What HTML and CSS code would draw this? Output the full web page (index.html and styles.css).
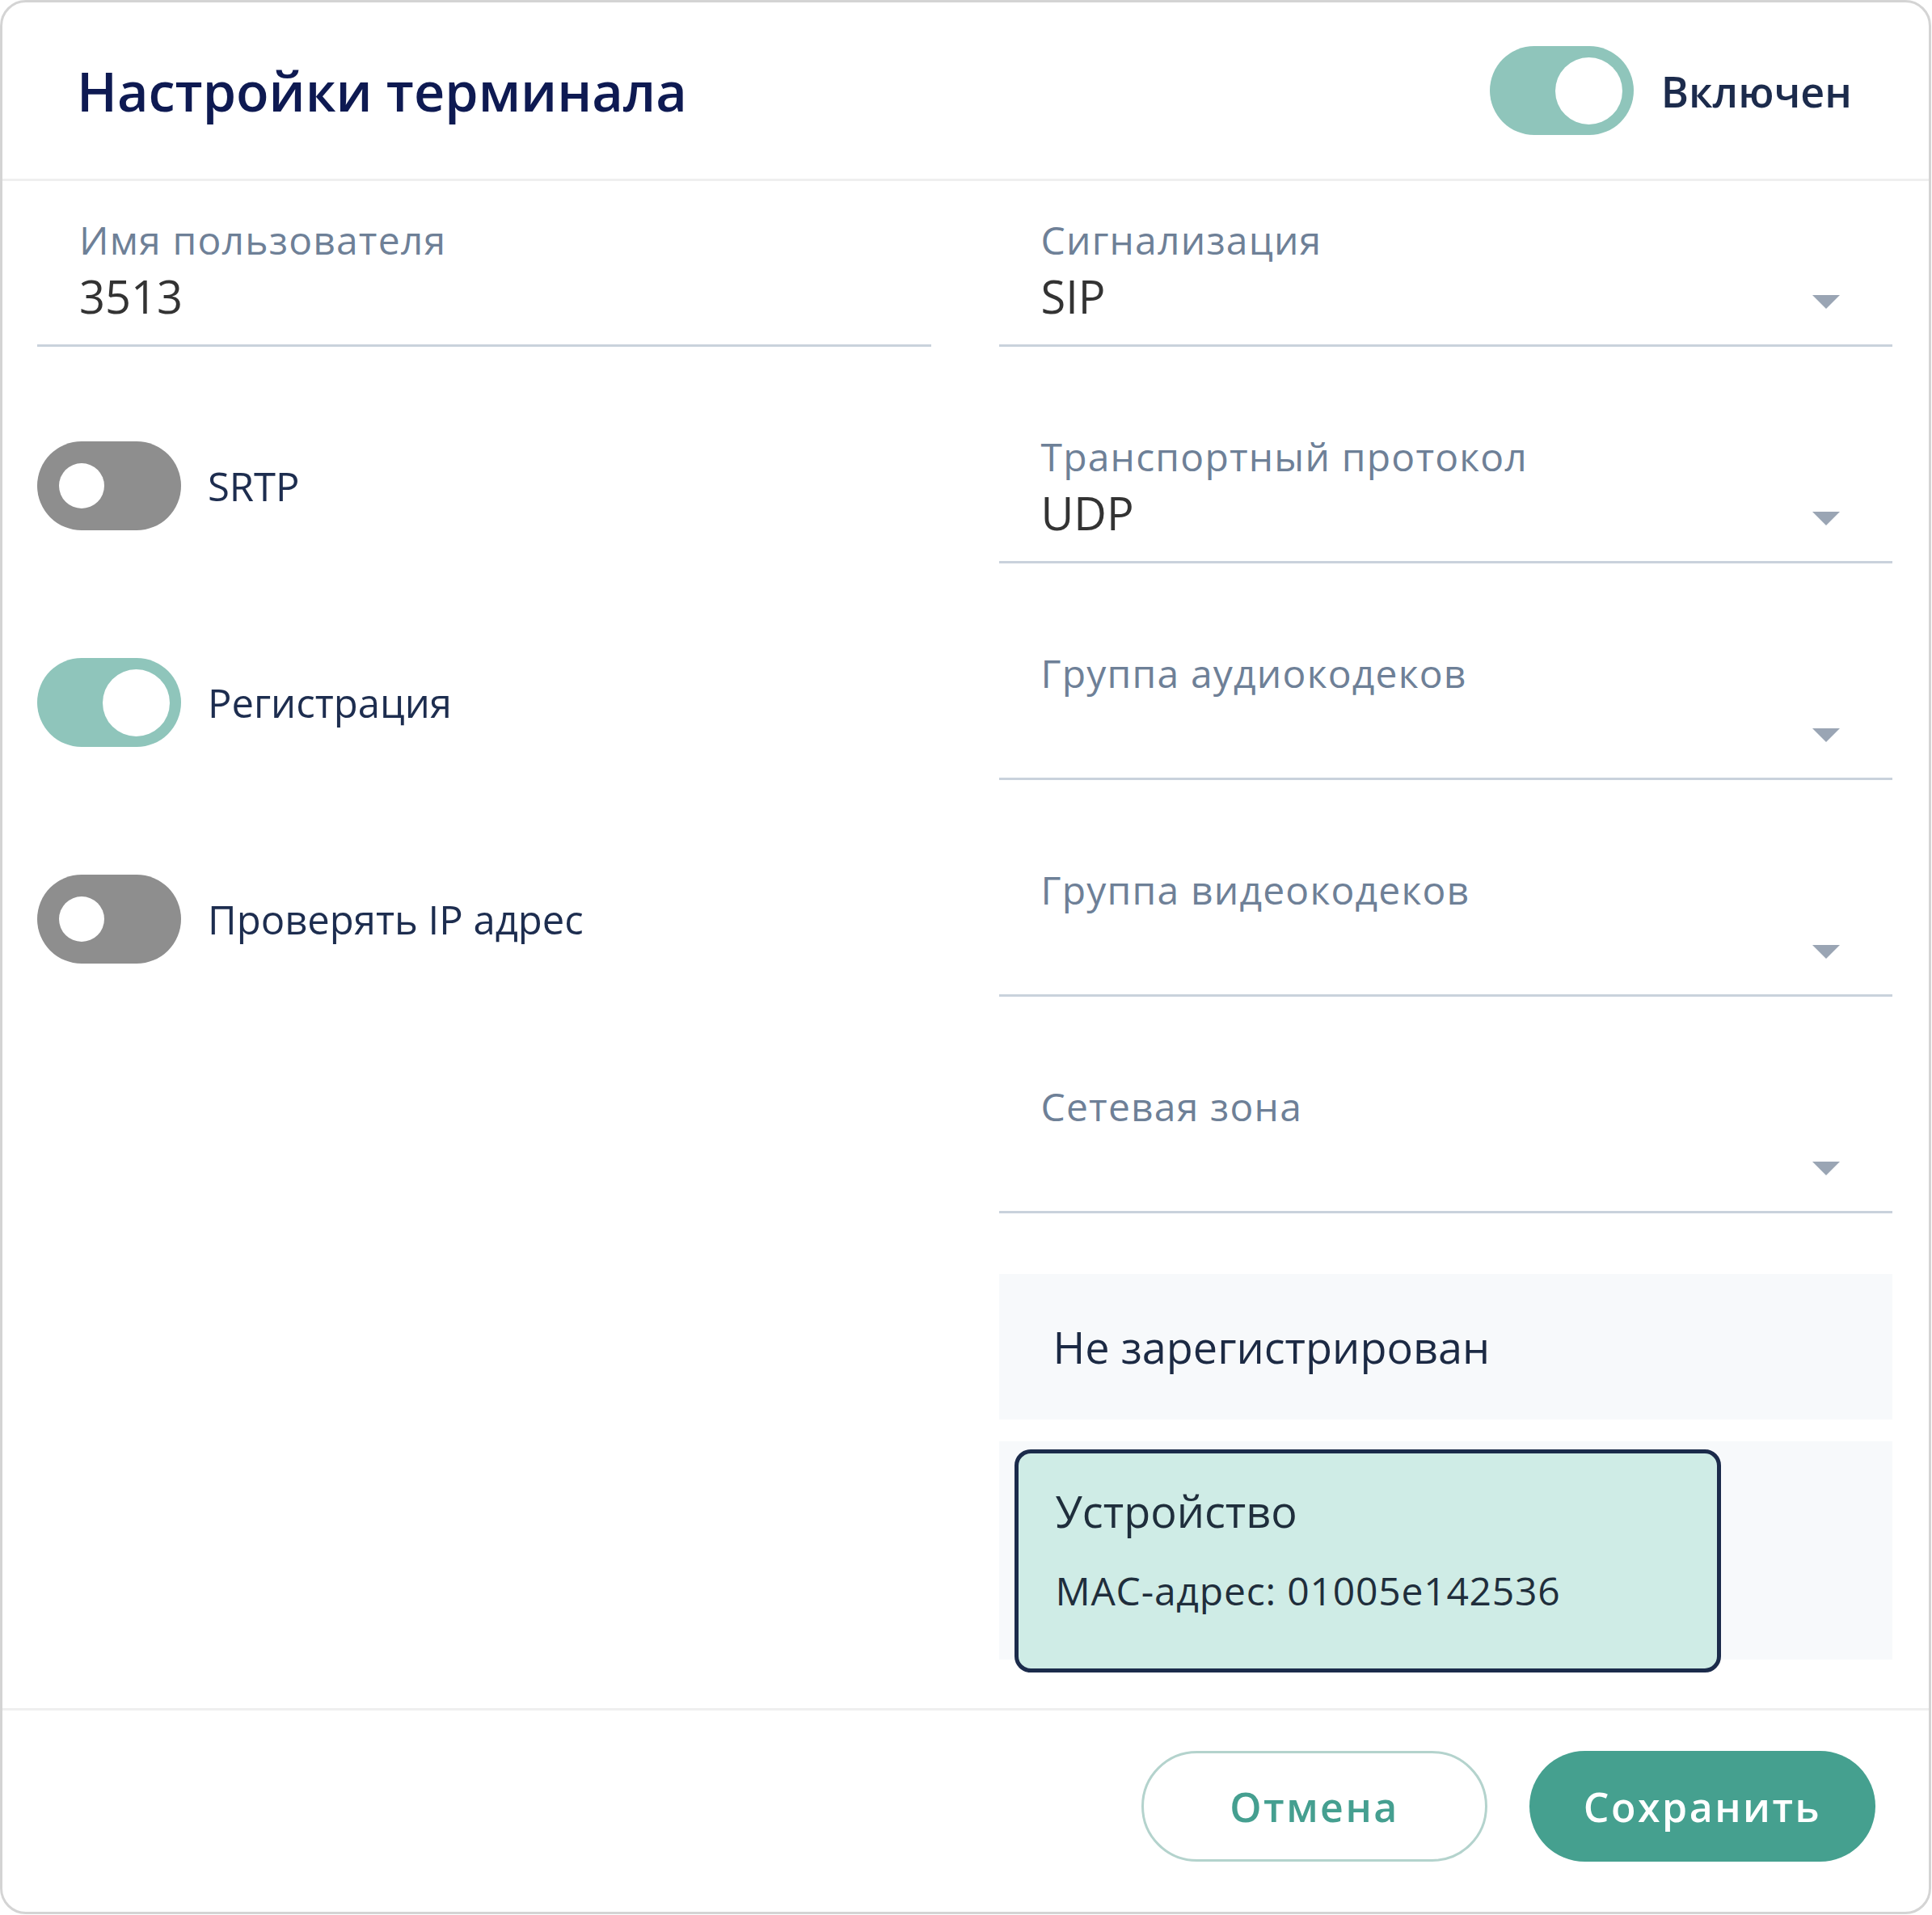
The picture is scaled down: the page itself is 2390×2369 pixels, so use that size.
FILE: index.html
```html
<!DOCTYPE html>
<html lang="ru">
<head>
    <meta charset="UTF-8">
    <meta name="viewport" content="width=device-width, initial-scale=1.0">
    <title>Настройки терминала</title>
    <link rel="stylesheet" href="styles.css">
</head>
<body>
    <div class="dialog">
        <div class="dialog-header">
            <h1>Настройки терминала</h1>
            <div class="switch-row">
                <span class="switch on"><span class="knob"></span></span>
                <span class="switch-title">Включен</span>
            </div>
        </div>

        <div class="dialog-body">
            <div class="column">
                <div class="field">
                    <div class="field-label">Имя пользователя</div>
                    <div class="field-value">3513</div>
                </div>
                <div class="toggles">
                    <div class="toggle-row">
                        <span class="switch"><span class="knob"></span></span>
                        <span class="toggle-label">SRTP</span>
                    </div>
                    <div class="toggle-row">
                        <span class="switch on"><span class="knob"></span></span>
                        <span class="toggle-label">Регистрация</span>
                    </div>
                    <div class="toggle-row">
                        <span class="switch"><span class="knob"></span></span>
                        <span class="toggle-label">Проверять IP адрес</span>
                    </div>
                </div>
            </div>

            <div class="column">
                <div class="field">
                    <div class="field-label">Сигнализация</div>
                    <div class="field-value">SIP<span class="arrow"></span></div>
                </div>
                <div class="field">
                    <div class="field-label">Транспортный протокол</div>
                    <div class="field-value">UDP<span class="arrow"></span></div>
                </div>
                <div class="field">
                    <div class="field-label">Группа аудиокодеков</div>
                    <div class="field-value"><span class="arrow"></span></div>
                </div>
                <div class="field">
                    <div class="field-label">Группа видеокодеков</div>
                    <div class="field-value"><span class="arrow"></span></div>
                </div>
                <div class="field">
                    <div class="field-label">Сетевая зона</div>
                    <div class="field-value"><span class="arrow"></span></div>
                </div>

                <div class="status">Не зарегистрирован</div>

                <div class="devices">
                    <div class="device">
                        <div class="device-name">Устройство</div>
                        <div class="device-mac">MAC-адрес: 01005e142536</div>
                    </div>
                </div>
            </div>
        </div>

        <div class="dialog-footer">
            <button class="btn btn-outline">Отмена</button>
            <button class="btn btn-primary">Сохранить</button>
        </div>
    </div>
</body>
</html>
```

FILE: styles.css
```css
body {
    margin: 0;
    font-family: "Open Sans", "Noto Sans", sans-serif;
    background: #fff;
}
.dialog {
    box-sizing: border-box;
    width: 2389px;
    height: 2368px;
    border: 3px solid #d4d4d4;
    border-radius: 32px;
    background: #fff;
    display: flex;
    flex-direction: column;
}
.dialog-header {
    height: 218px;
    padding: 0 95px 0 92px;
    display: flex;
    align-items: center;
    justify-content: space-between;
    border-bottom: 3px solid #efefef;
}
h1 {
    margin: 0;
    font-size: 66.5px;
    font-weight: 600;
    color: #0e1a52;
}
.switch-row {
    display: flex;
    align-items: center;
    gap: 34px;
}
.switch-title {
    font-size: 52px;
    font-weight: 600;
    color: #1c2b4c;
}

/* switch */
.switch {
    box-sizing: border-box;
    width: 178px;
    height: 110px;
    border-radius: 55px;
    background: #8e8e8e;
    display: flex;
    align-items: center;
    padding: 0 27px;
    flex-shrink: 0;
}
.switch .knob {
    width: 56px;
    height: 56px;
    border-radius: 50%;
    background: #fff;
}
.switch.on {
    background: #8fc5bb;
    justify-content: flex-end;
    padding: 0 14px;
}
.switch.on .knob {
    width: 83px;
    height: 83px;
}

.dialog-body {
    flex: 1;
    display: grid;
    grid-template-columns: 1fr 1fr;
    column-gap: 84px;
    padding: 42px 45px 0 43px;
}
.column {
    display: flex;
    flex-direction: column;
}

/* fields */
.field {
    padding: 0 52px 22px;
    border-bottom: 3px solid #c9d2dc;
    margin-bottom: 105px;
}
.field-label {
    font-size: 48px;
    font-weight: 500;
    letter-spacing: 1.2px;
    line-height: 62px;
    color: #6e8097;
}
.field-value {
    height: 76px;
    font-size: 56px;
    line-height: 76px;
    color: #333;
    display: flex;
    align-items: center;
    justify-content: space-between;
}
.arrow {
    margin-left: auto;
    margin-right: 13px;
    margin-top: 14px;
    width: 0;
    height: 0;
    border-left: 17px solid transparent;
    border-right: 17px solid transparent;
    border-top: 17px solid #9aa5b4;
}

/* toggles */
.toggles {
    margin-top: 12px;
    display: flex;
    flex-direction: column;
    gap: 158px;
}
.toggle-row {
    display: flex;
    align-items: center;
    gap: 33px;
}
.toggle-label {
    font-size: 49px;
    color: #1d2d4f;
}

/* status */
.status {
    margin-top: -30px;
    height: 180px;
    padding-left: 67px;
    background: #f7f9fb;
    display: flex;
    align-items: center;
    font-size: 54px;
    font-weight: 500;
    color: #1c2a44;
}
.devices {
    margin-top: 27px;
    height: 270px;
    background: #f7f9fb;
}
.device {
    box-sizing: border-box;
    width: 874px;
    height: 276px;
    margin: 10px 0 0 19px;
    padding: 34px 46px 0;
    border: 5px solid #1b2b4b;
    border-radius: 20px;
    background: #cfece6;
    color: #1f2e3c;
}
.device-name {
    font-size: 54px;
    font-weight: 500;
    line-height: 74px;
}
.device-mac {
    margin-top: 29px;
    font-size: 48px;
    font-weight: 500;
    letter-spacing: 0.8px;
    line-height: 66px;
}

/* footer */
.dialog-footer {
    height: 252px;
    box-sizing: border-box;
    border-top: 3px solid #efefef;
    padding: 50px 66px 0 0;
    display: flex;
    justify-content: flex-end;
    align-items: flex-start;
    gap: 52px;
}
.btn {
    box-sizing: border-box;
    width: 428px;
    height: 137px;
    border-radius: 69px;
    font-family: "Open Sans", "Noto Sans", sans-serif;
    font-size: 50px;
    font-weight: 600;
    letter-spacing: 2.5px;
    cursor: pointer;
}
.btn-outline {
    background: #fff;
    border: 3px solid #b4d3cd;
    color: #459f90;
}
.btn-primary {
    background: #45a08f;
    border: none;
    color: #fff;
}
```
